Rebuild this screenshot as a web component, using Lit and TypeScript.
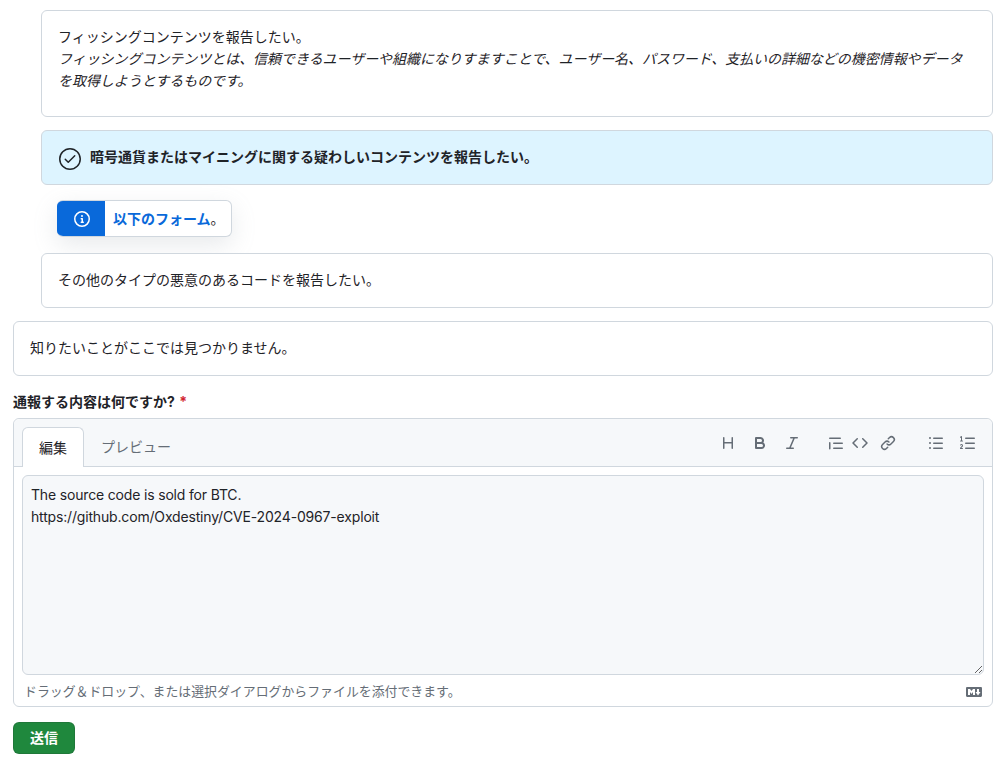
import { LitElement, html, css, svg } from "lit";
import { customElement } from "lit/decorators.js";

const P: Record<string, string> = {
  heading: "M3.75 2a.75.75 0 0 1 .75.75V7h7V2.75a.75.75 0 0 1 1.5 0v10.5a.75.75 0 0 1-1.5 0V8.5h-7v4.75a.75.75 0 0 1-1.5 0V2.75A.75.75 0 0 1 3.75 2Z",
  bold: "M4 2h4.5a3.501 3.501 0 0 1 2.852 5.53A3.499 3.499 0 0 1 9.5 14H4a1 1 0 0 1-1-1V3a1 1 0 0 1 1-1Zm1 7v3h4.5a1.5 1.5 0 0 0 0-3Zm3.5-2a1.5 1.5 0 0 0 0-3H5v3Z",
  italic: "M6 2.75A.75.75 0 0 1 6.75 2h6.5a.75.75 0 0 1 0 1.5h-2.505l-3.858 9H9.25a.75.75 0 0 1 0 1.5h-6.5a.75.75 0 0 1 0-1.5h2.505l3.858-9H6.75A.75.75 0 0 1 6 2.75Z",
  quote: "M1.75 2.5h10.5a.75.75 0 0 1 0 1.5H1.75a.75.75 0 0 1 0-1.5Zm4 5h8.5a.75.75 0 0 1 0 1.5h-8.5a.75.75 0 0 1 0-1.5Zm0 5h8.5a.75.75 0 0 1 0 1.5h-8.5a.75.75 0 0 1 0-1.5ZM2.5 7.75v6a.75.75 0 0 1-1.5 0v-6a.75.75 0 0 1 1.5 0Z",
  code: "m11.28 3.22 4.25 4.25a.75.75 0 0 1 0 1.06l-4.25 4.25a.749.749 0 0 1-1.275-.326.749.749 0 0 1 .215-.734L13.94 8l-3.72-3.72a.749.749 0 0 1 .326-1.275.749.749 0 0 1 .734.215Zm-6.56 0a.751.751 0 0 1 1.042.018.751.751 0 0 1 .018 1.042L2.06 8l3.72 3.72a.749.749 0 0 1-.326 1.275.749.749 0 0 1-.734-.215L.47 8.53a.75.75 0 0 1 0-1.06Z",
  link: "m7.775 3.275 1.25-1.25a3.5 3.5 0 1 1 4.95 4.95l-2.5 2.5a3.5 3.5 0 0 1-4.95 0 .751.751 0 0 1 .018-1.042.751.751 0 0 1 1.042-.018 1.998 1.998 0 0 0 2.83 0l2.5-2.5a2.002 2.002 0 0 0-2.83-2.83l-1.25 1.25a.751.751 0 0 1-1.042-.018.751.751 0 0 1-.018-1.042Zm-4.69 9.64a1.998 1.998 0 0 0 2.83 0l1.25-1.25a.751.751 0 0 1 1.042.018.751.751 0 0 1 .018 1.042l-1.25 1.25a3.5 3.5 0 1 1-4.95-4.95l2.5-2.5a3.5 3.5 0 0 1 4.95 0 .751.751 0 0 1-.018 1.042.751.751 0 0 1-1.042.018 1.998 1.998 0 0 0-2.83 0l-2.5 2.5a1.998 1.998 0 0 0 0 2.83Z",
  ul: "M5.75 2.5h8.5a.75.75 0 0 1 0 1.5h-8.5a.75.75 0 0 1 0-1.5Zm0 5h8.5a.75.75 0 0 1 0 1.5h-8.5a.75.75 0 0 1 0-1.5Zm0 5h8.5a.75.75 0 0 1 0 1.5h-8.5a.75.75 0 0 1 0-1.5ZM2 14a1 1 0 1 1 0-2 1 1 0 0 1 0 2Zm1-6a1 1 0 1 1-2 0 1 1 0 0 1 2 0ZM2 4a1 1 0 1 1 0-2 1 1 0 0 1 0 2Z",
  ol: "M5 3.25a.75.75 0 0 1 .75-.75h8.5a.75.75 0 0 1 0 1.5h-8.5A.75.75 0 0 1 5 3.25Zm0 5a.75.75 0 0 1 .75-.75h8.5a.75.75 0 0 1 0 1.5h-8.5A.75.75 0 0 1 5 8.25Zm0 5a.75.75 0 0 1 .75-.75h8.5a.75.75 0 0 1 0 1.5h-8.5a.75.75 0 0 1-.75-.75ZM.924 10.32a.5.5 0 0 1-.851-.525c.097-.144.215-.273.348-.384.228-.19.588-.392 1.068-.392.468 0 .858.181 1.126.484.259.294.377.673.377 1.038 0 .987-.686 1.495-1.156 1.845l-.047.035c-.303.225-.522.4-.654.597h1.357a.5.5 0 0 1 0 1H.5a.5.5 0 0 1-.5-.5c0-1.005.692-1.52 1.167-1.875l.035-.025c.531-.396.8-.625.8-1.078a.57.57 0 0 0-.128-.376C1.806 10.068 1.695 10 1.5 10a.658.658 0 0 0-.429.163.835.835 0 0 0-.147.157ZM1.5 1.1a.5.5 0 0 1 .5.5V5.5h.5a.5.5 0 0 1 0 1h-2a.5.5 0 0 1 0-1H1V2.5c-.2.1-.4.2-.6.2a.5.5 0 0 1-.2-1c.3-.1.6-.3.9-.5a.5.5 0 0 1 .4-.1Z",
  md: "M14.85 3c.63 0 1.15.52 1.14 1.15v7.7c0 .63-.51 1.15-1.15 1.15H1.15C.52 13 0 12.48 0 11.84V4.15C0 3.52.52 3 1.15 3ZM9 11V5H7L5.5 7 4 5H2v6h2V8l1.5 1.92L7 8v3Zm2.99.5L14.5 8H13V5h-2v3H9.5Z",
  info: "M0 8a8 8 0 1 1 16 0A8 8 0 0 1 0 8Zm8-6.5a6.5 6.5 0 1 0 0 13 6.5 6.5 0 0 0 0-13ZM6.5 7.75A.75.75 0 0 1 7.25 7h1a.75.75 0 0 1 .75.75v2.75h.25a.75.75 0 0 1 0 1.5h-2a.75.75 0 0 1 0-1.5h.25v-2h-.25a.75.75 0 0 1-.75-.75ZM8 6a1 1 0 1 1 0-2 1 1 0 0 1 0 2Z",
};
const icon = (n: string, cls = "") =>
  html`<svg class="ic ${cls}" viewBox="0 0 16 16" width="16" height="16" fill="currentColor">${svg`<path d=${P[n]}></path>`}</svg>`;

@customElement("app-root")
export class AppRoot extends LitElement {
  static styles = css`
    :host {
      display: block;
      box-sizing: border-box;
      width: 1004px;
      height: 768px;
      overflow: hidden;
      padding: 10px 11px 0 13px;
      background: #fff;
      color: #1f2328;
      font-family: "Inter", "Noto Sans CJK JP", sans-serif;
      font-size: 14px;
      line-height: 22px;
    }
    .nested { margin-left: 28px; display: flex; flex-direction: column; }
    .card {
      border: 1px solid #d0d7de;
      border-radius: 6px;
      padding: 16px;
      background: #fff;
    }
    .c1 { height: 107px; box-sizing: border-box; padding-top: 15px; }
    .c1 em { font-style: italic; letter-spacing: -0.045px; }
    .selected {
      margin-top: 13px;
      height: 55px;
      box-sizing: border-box;
      display: flex;
      align-items: center;
      gap: 8px;
      background: #ddf4ff;
      padding: 0 16px 2px;
      font-weight: 700;
    }
    .selected svg { flex: none; margin-top: 4px; }
    .toast {
      margin: 15px 0 16px 16px;
      align-self: flex-start;
      display: flex;
      height: 37px;
      box-sizing: border-box;
      border-radius: 6px;
      border: 1px solid #d0d7de;
      border-left: 0;
      box-shadow: 0 8px 24px rgba(140, 149, 159, 0.2);
      background: #fff;
      overflow: hidden;
    }
    .toast-ic {
      box-sizing: border-box;
      width: 48px;
      padding-left: 2px;
      background: #0969da;
      color: #fff;
      display: flex;
      align-items: center;
      justify-content: center;
    }
    .toast-msg { padding: 0 6px 0 8px; line-height: 35px; font-weight: 700; color: #0969da; }
    .toast-msg span { color: #1f2328; font-weight: 400; }
    .plain { height: 55px; box-sizing: border-box; padding: 15px 16px; }
    .c4 { margin-top: 13px; }
    label {
      display: block;
      margin-top: 15px;
      height: 22px;
      font-weight: 700;
      font-size: 14px;
    }
    .req { color: #d1242f; margin-left: 1px; }
    .editor {
      margin-top: 5px;
      height: 289px;
      box-sizing: border-box;
      border: 1px solid #d0d7de;
      border-radius: 6px;
      display: flex;
      flex-direction: column;
    }
    .head {
      height: 48px;
      flex: none;
      box-sizing: border-box;
      background: #f6f8fa;
      border-bottom: 1px solid #d0d7de;
      border-radius: 6px 6px 0 0;
      display: flex;
      justify-content: space-between;
      padding: 8px 8px 0 8px;
    }
    .tabs { display: flex; }
    .tab {
      box-sizing: border-box;
      height: 40px;
      padding: 0 17px;
      line-height: 40px;
      color: #656d76;
    }
    .tab.on {
      width: 62px;
      text-align: center;
      padding: 0;
      background: #fff;
      color: #1f2328;
      border: 1px solid #d0d7de;
      border-bottom: 0;
      border-radius: 6px 6px 0 0;
    }
    .tools {
      display: flex;
      align-items: flex-start;
      color: #656d76;
      padding: 8px 8px 0 0;
    }
    .ic { display: block; flex: none; }
    .m16 { margin-left: 16px; }
    .m28 { margin-left: 28px; }
    .m8 { margin-left: 8px; }
    .m12 { margin-left: 12px; }
    .m32 { margin-left: 32px; }
    .body { padding: 8px 8px 0; flex: 1; display: flex; flex-direction: column; }
    textarea {
      display: block;
      box-sizing: border-box;
      width: 100%;
      height: 200px;
      padding: 8px;
      margin: 0;
      border: 1px solid #d0d7de;
      border-radius: 6px;
      background: #f6f8fa;
      color: #1f2328;
      font: inherit;
      letter-spacing: -0.17px;
      line-height: 21.5px;
      outline: none;
      resize: vertical;
    }
    .foot {
      display: flex;
      justify-content: space-between;
      align-items: center;
      padding: 5px 2px 0 2px;
      font-size: 12.9px;
      line-height: 24px;
      color: #656d76;
      height: 24px;
    }
    .send {
      margin-top: 15px;
      width: 62px;
      height: 32px;
      box-sizing: border-box;
      border: 1px solid rgba(31, 35, 40, 0.15);
      border-radius: 6px;
      background: #1f883d;
      color: #fff;
      font: inherit;
      font-weight: 700;
      line-height: 20px;
      padding: 0;
    }
  `;

  render() {
    return html`
      <div class="nested">
        <div class="card c1">フィッシングコンテンツを報告したい。<br /><em>フィッシングコンテンツとは、信頼できるユーザーや組織になりすますことで、ユーザー名、パスワード、支払いの詳細などの機密情報やデータを取得しようとするものです。</em></div>
        <div class="card selected">
          <svg viewBox="0 0 24 24" width="24" height="24" fill="currentColor"><path d="M17.28 9.28a.75.75 0 0 0-1.06-1.06l-5.97 5.97-2.47-2.47a.75.75 0 0 0-1.06 1.06l3 3a.75.75 0 0 0 1.06 0l6.5-6.5Z"></path><path d="M12 1c6.075 0 11 4.925 11 11s-4.925 11-11 11S1 18.075 1 12 5.925 1 12 1ZM2.5 12a9.5 9.5 0 0 0 9.5 9.5 9.5 9.5 0 0 0 9.5-9.5A9.5 9.5 0 0 0 12 2.5 9.5 9.5 0 0 0 2.5 12Z"></path></svg>
          <span>暗号通貨またはマイニングに関する疑わしいコンテンツを報告したい。</span>
        </div>
        <div class="toast">
          <div class="toast-ic">${icon("info")}</div>
          <div class="toast-msg">以下のフォーム<span>。</span></div>
        </div>
        <div class="card plain">その他のタイプの悪意のあるコードを報告したい。</div>
      </div>
      <div class="card plain c4">知りたいことがここでは見つかりません。</div>
      <label>通報する内容は何ですか? <span class="req">*</span></label>
      <div class="editor">
        <div class="head">
          <div class="tabs">
            <div class="tab on">編集</div>
            <div class="tab">プレビュー</div>
          </div>
          <div class="tools">
            ${icon("heading")}${icon("bold", "m16")}${icon("italic", "m16")}
            ${icon("quote", "m28")}${icon("code", "m8")}${icon("link", "m12")}
            ${icon("ul", "m32")}${icon("ol", "m16")}
          </div>
        </div>
        <div class="body">
          <textarea spellcheck="false" .value=${"The source code is sold for BTC.\nhttps://github.com/Oxdestiny/CVE-2024-0967-exploit"}></textarea>
          <div class="foot">
            <span>ドラッグ＆ドロップ、または選択ダイアログからファイルを添付できます。</span>
            ${icon("md")}
          </div>
        </div>
      </div>
      <button class="send">送信</button>
    `;
  }
}
